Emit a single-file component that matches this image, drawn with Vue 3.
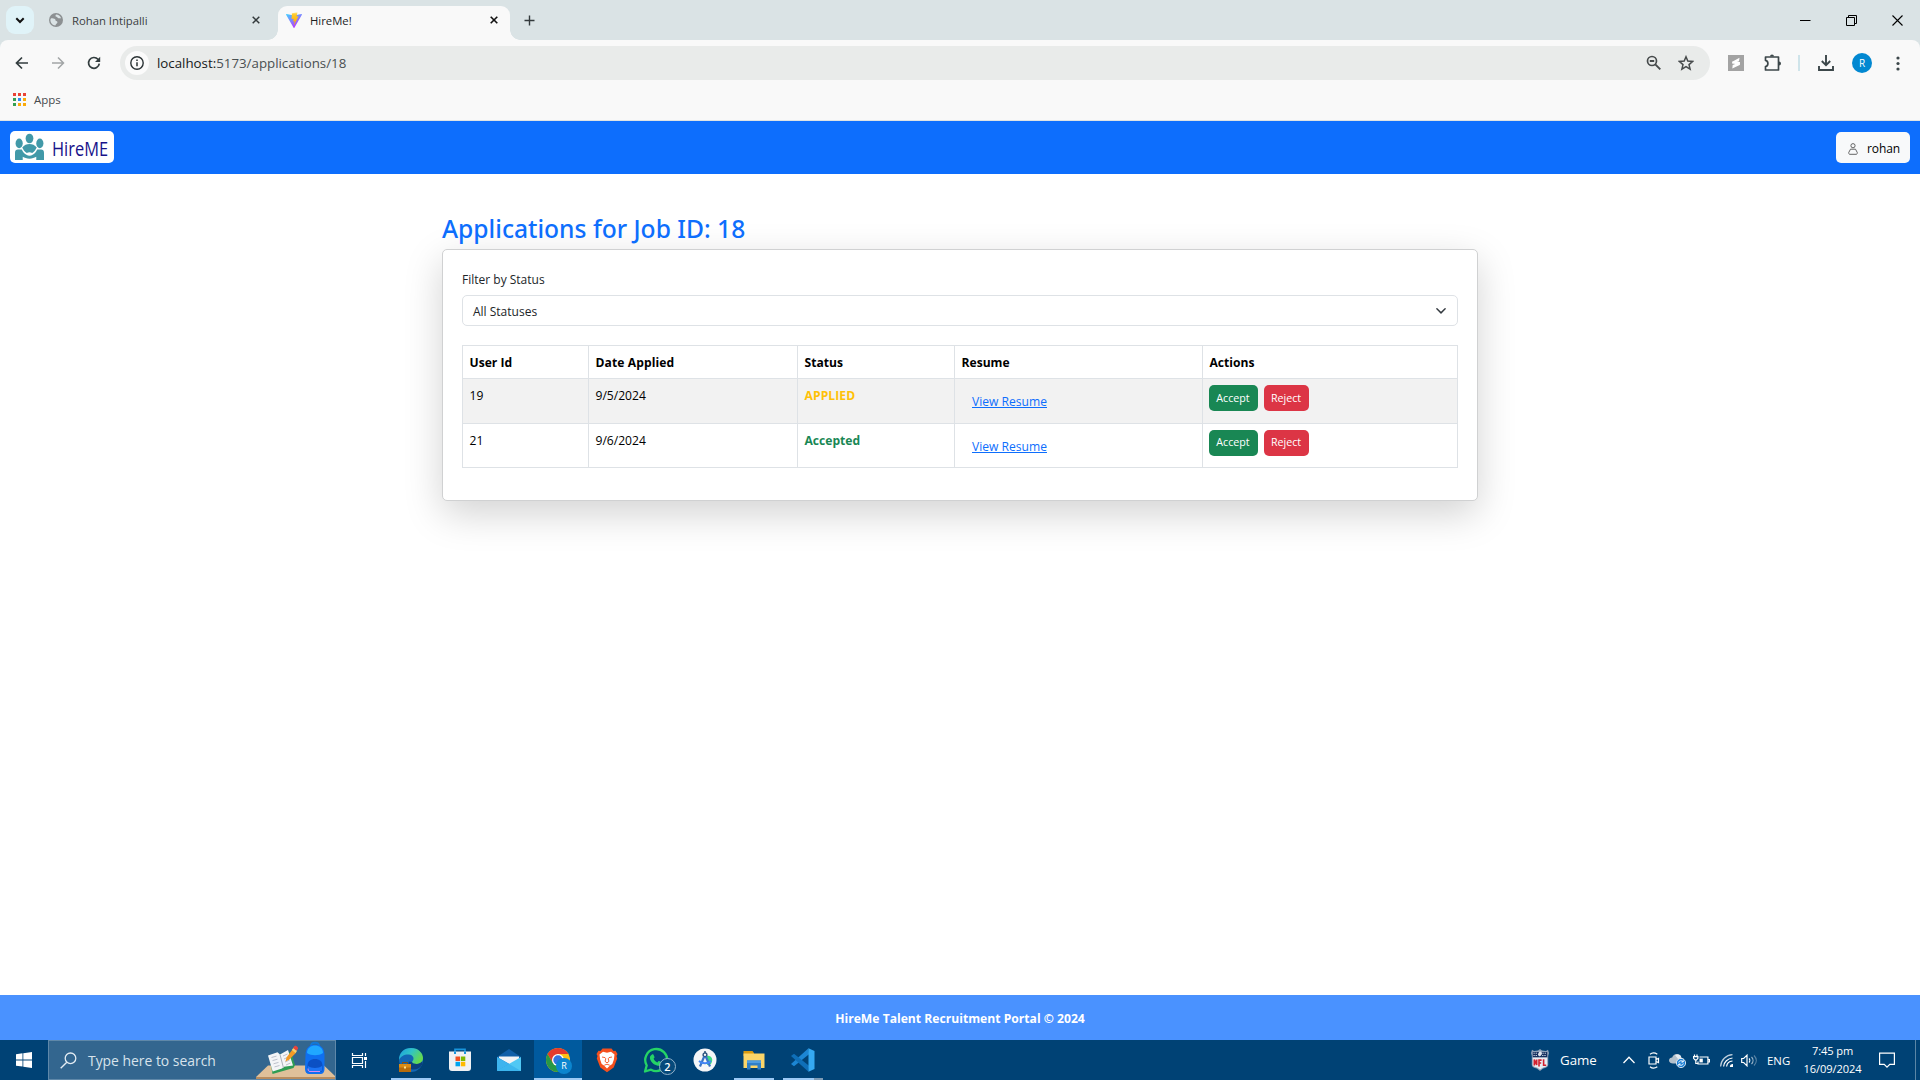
<script setup>
import { ref } from 'vue'

const status = ref('All Statuses')
const columns = ['User Id', 'Date Applied', 'Status', 'Resume', 'Actions']
const applications = [
  { id: 19, date: '9/5/2024', status: 'APPLIED', tone: 'applied' },
  { id: 21, date: '9/6/2024', status: 'Accepted', tone: 'accepted' },
]
</script>

<template>
  <div class="screen">
    <!-- Tab strip -->
    <div class="tabstrip">
      <div class="tab-menu">
        <svg width="10" height="7" viewBox="0 0 10 7"><path d="M1.3 1.3 5 5l3.700-3.700" fill="none" stroke="#111" stroke-width="2" /></svg>
      </div>
      <div class="tab idle">
        <svg class="favicon" width="14" height="14" viewBox="0 0 14 14">
          <circle cx="7" cy="7" r="7" fill="#8c9092" />
          <path d="M2.200 5.200c1.500.2 3 .1 3.800.9.9.9.1 1.600 1.200 2 1.100.4 1.600 1 1 2-.5.9-1.600 1.200-1.800 2.500C3.600 12.200 1.400 9.800 1.400 7c0-.7.3-1.300.8-1.800zM7 1.500c-.8 1.100-.7 2 .4 2.300 1.200.3.9 1.300 2.200 1.500 1 .2 1.600-.3 2.500 0C11.400 3 9.400 1.500 7 1.500z" fill="#dae3e5" />
        </svg>
        <span class="tab-title">Rohan Intipalli</span>
        <svg class="tab-x" width="8" height="8" viewBox="0 0 8 8"><path d="M.7.7l6.600 6.600M7.300.7.7 7.300" stroke="#333a3c" stroke-width="1.500" /></svg>
      </div>
      <div class="tab active">
        <svg class="favicon" width="16" height="16" viewBox="0 0 16 16">
          <defs>
            <linearGradient id="vt" x1="0" y1="0" x2=".6" y2="1"><stop offset="0" stop-color="#41d1ff" /><stop offset="1" stop-color="#bd34fe" /></linearGradient>
            <linearGradient id="vb" x1="0" y1="0" x2="0" y2="1"><stop offset="0" stop-color="#ffea83" /><stop offset=".2" stop-color="#ffc928" /><stop offset="1" stop-color="#ffa800" /></linearGradient>
          </defs>
          <path d="M15.900 2.700 8.400 15.800c-.2.300-.6.300-.8 0L.1 2.700c-.2-.3.100-.7.500-.6L8 3.400l7.400-1.300c.4-.1.700.3.500.6z" fill="url(#vt)" />
          <path d="m11.500.2-5.400 1c-.1 0-.2.100-.2.200l-.3 5.500c0 .1.100.3.300.2l1.500-.3c.1 0 .3.100.2.300l-.4 2.100c0 .1.100.3.300.2l.9-.3c.1 0 .3.100.2.300l-.7 3.300c0 .2.200.3.300.1l4.200-8.300c.1-.1 0-.3-.2-.3l-1.500.3c-.1 0-.3-.1-.2-.2l1-3.800c0-.1-.1-.3 0-.3z" fill="url(#vb)" />
        </svg>
        <span class="tab-title">HireMe!</span>
        <svg class="tab-x" width="8" height="8" viewBox="0 0 8 8"><path d="M.7.7l6.600 6.600M7.300.7.7 7.300" stroke="#111" stroke-width="1.600" /></svg>
      </div>
      <svg class="new-tab" width="11" height="11" viewBox="0 0 11 11"><path d="M5.500.5v10M.5 5.500h10" stroke="#333a3c" stroke-width="1.400" /></svg>
      <div class="window-buttons">
        <svg width="11" height="11" viewBox="0 0 11 11"><path d="M0 5.500h10.500" stroke="#000" /></svg>
        <svg width="11" height="11" viewBox="0 0 11 11"><path d="M.5 2.500h8v8h-8zM2.500 2.500v-2h8v8h-2" fill="none" stroke="#000" /></svg>
        <svg width="11" height="11" viewBox="0 0 11 11"><path d="M.5.5l10 10M10.500.5l-10 10" stroke="#000" stroke-width="1.100" /></svg>
      </div>
    </div>

    <!-- Address bar -->
    <div class="toolbar">
      <div class="nav">
        <svg width="14" height="14" viewBox="0 0 14 14"><path d="M13 7H2M7 1.500 1.500 7 7 12.500" fill="none" stroke="#333d3f" stroke-width="1.700" /></svg>
        <svg width="14" height="14" viewBox="0 0 14 14"><path d="M1 7h11M7 1.500 12.500 7 7 12.500" fill="none" stroke="#a2a5a6" stroke-width="1.500" /></svg>
        <svg width="14" height="14" viewBox="0 0 14 14"><path d="M12.300 7.700A5.400 5.400 0 1 1 11 3.300L12.500 5" fill="none" stroke="#333d3f" stroke-width="1.700" /><path d="M13.200.8v5.200H8z" fill="#333d3f" /></svg>
      </div>
      <div class="omnibox">
        <span class="site-info">
          <svg width="14" height="14" viewBox="0 0 14 14"><circle cx="7" cy="7" r="6.200" fill="none" stroke="#2b3335" stroke-width="1.400" /><path d="M7 6.200v4M7 3.600v1.500" stroke="#2b3335" stroke-width="1.500" /></svg>
        </span>
        <span class="url"><b>localhost:</b>5173/applications/18</span>
        <svg class="zoom" width="16" height="16" viewBox="0 0 16 16"><circle cx="6" cy="6" r="4.500" fill="none" stroke="#474b4c" stroke-width="1.700" /><path d="M3.800 6h4.400M9.300 9.300l5 5" stroke="#474b4c" stroke-width="1.900" /></svg>
        <svg class="star" width="16" height="16" viewBox="0 0 16 16"><path d="m8 1.800 1.800 4.300 4.700.4L11 9.600l1.100 4.600L8 11.700l-4.100 2.500L5 9.600 1.500 6.500l4.700-.4z" fill="none" stroke="#474b4c" stroke-width="1.500" /></svg>
      </div>
      <div class="extensions">
        <svg width="16" height="16" viewBox="0 0 16 16"><path d="M0 0h16v16H0z" fill="#a3a3a3" /><path d="m4.200 6.800 7.300-4-.5 3.400-6.800 2.500zM4.300 13.500l7.400-3.600.2-3-7.200 3z" fill="#fff" /><path d="m4.200 6.800 7.700.1-.2 3L5 8.500z" fill="#fff" /></svg>
        <svg width="18" height="18" viewBox="0 0 18 18"><path d="M1.500 3h13v13h-13v-3.400c1.700-.3 2.400-1.500 2.400-3.100S3.200 6.700 1.500 6.400z" fill="none" stroke="#3c474a" stroke-width="1.700" stroke-linejoin="round" /><path d="M6 2.500a2 2 0 0 1 4 0zM15 7.500a2 2 0 0 1 0 4z" fill="#3c474a" /></svg>
        <i class="divider"></i>
        <svg width="16" height="16" viewBox="0 0 16 16"><path d="M8 0v10M3.800 6 8 10.200 12.200 6M1 11v4h14v-4" fill="none" stroke="#3c474a" stroke-width="1.900" /></svg>
        <span class="profile">R</span>
        <svg width="4" height="15" viewBox="0 0 4 15"><circle cx="2" cy="2" r="1.600" fill="#3c474a" /><circle cx="2" cy="7.500" r="1.600" fill="#3c474a" /><circle cx="2" cy="13" r="1.600" fill="#3c474a" /></svg>
      </div>
    </div>
    <div class="bookmarks">
      <svg width="13" height="13" viewBox="0 0 13 13">
        <path d="M0 0h3v3H0zM5 0h3v3H5zM10 0h3v3h-3z" fill="#ea4335" />
        <path d="M0 5h3v3H0zM0 10h3v3H0z" fill="#34a053" /><path d="M5 5h3v3H5z" fill="#2d8cf0" />
        <path d="M10 5h3v3h-3zM5 10h3v3H5zM10 10h3v3h-3z" fill="#fbab0a" />
      </svg>
      <span>Apps</span>
    </div>

    <!-- Application page -->
    <header class="navbar">
      <div class="brand">
        <svg width="29" height="28" viewBox="0 0 30 28" fill="#4199a8">
          <ellipse cx="15" cy="5.200" rx="4" ry="5" /><ellipse cx="4.300" cy="10.300" rx="3.700" ry="5" /><ellipse cx="25.700" cy="10.300" rx="3.700" ry="5" />
          <path d="M7.500 14.500c2-2.600 4.600-3.700 7.500-3.700s5.500 1.100 7.500 3.700c-1 2.200-2.800 4.600-4.700 5.800-1.700-1.300-4-1.300-5.600 0-2-1.200-3.800-3.600-4.700-5.800z" />
          <path d="M0 27.500V20c0-2 1.200-3.300 3-3.300h4c1.500 3 3 4.600 4.800 5.300 2 1.300 4.400 1.300 6.400 0 1.800-.7 3.300-2.300 4.800-5.300h4c1.800 0 3 1.300 3 3.300v7.500h-8v-3.300c-2.200 1-4 2-7 2s-5-1-7-2v3.300z" />
        </svg>
        <span>HireME</span>
      </div>
      <button class="user">
        <svg width="10" height="12" viewBox="0 0 10 12" fill="none" stroke="#555" stroke-width=".9"><circle cx="5" cy="2.700" r="2.100" /><path d="M2.500 6.200h5l1.800 3.400c.1.900-.3 1.700-1.200 1.700H1.900c-.9 0-1.300-.8-1.200-1.700z" stroke-linejoin="round" /></svg>
        <span>rohan</span>
      </button>
    </header>

    <main class="page">
      <h2>Applications for Job ID: 18</h2>
      <section class="card">
        <label>Filter by Status</label>
        <div class="select">
          <span>{{ status }}</span>
          <svg width="12" height="12" viewBox="0 0 16 16"><path d="m2.500 5 5.500 5.500L13.500 5" fill="none" stroke="#343a40" stroke-width="1.900" stroke-linecap="round" stroke-linejoin="round" /></svg>
        </div>
        <table>
          <colgroup><col class="c1" /><col class="c2" /><col class="c3" /><col class="c4" /><col /></colgroup>
          <thead><tr><th v-for="c in columns" :key="c">{{ c }}</th></tr></thead>
          <tbody>
            <tr v-for="a in applications" :key="a.id">
              <td>{{ a.id }}</td>
              <td>{{ a.date }}</td>
              <td class="status" :class="a.tone">{{ a.status }}</td>
              <td><a class="link">View Resume</a></td>
              <td class="action-cell"><div class="actions"><button class="accept">Accept</button><button class="reject">Reject</button></div></td>
            </tr>
          </tbody>
        </table>
      </section>
    </main>
    <footer class="footer">HireMe Talent Recruitment Portal © 2024</footer>

    <!-- Windows taskbar -->
    <div class="taskbar">
      <div class="start">
        <svg width="16" height="16" viewBox="0 0 16 16" fill="#fff"><path d="M0 2.200 6.500 1.300v6.200H0zM7.300 1.200 16 0v7.500H7.300zM0 8.400h6.500v6.200L0 13.700zM7.300 8.400H16V16l-8.700-1.200z" /></svg>
      </div>
      <div class="search">
        <svg class="lens" width="17" height="17" viewBox="0 0 17 17"><circle cx="10.500" cy="6.300" r="5.300" fill="none" stroke="#e3ecf3" stroke-width="1.300" /><path d="M6.800 10.200.7 16.200" stroke="#e3ecf3" stroke-width="1.400" /></svg>
        <span>Type here to search</span>
        <svg class="school" width="79" height="38" viewBox="0 0 79 38">
          <path d="M0 36 12 24.500h56L79 35v3H0z" fill="#dfc09a" /><path d="M0 36h79v2H0z" fill="#b98d5f" />
          <path d="m16.500 33 21-6 1.500-3L35 11l-21.500 4z" fill="#2e9d53" /><path d="m12 14.500 9.500-3.200L24 13.500l8-4.500 5 15.500-9 1.200-2 1.800-9.300 3z" fill="#f4f5f7" /><path d="m24 13.500 3.500 13.500" stroke="#aab0bb" /><path d="m15.500 16.500 5-1.400m-4 4.500 5-1.400m-4 4.600 5-1.400m-4 4.500 5-1.400M27 15l4.500-2m-3.500 5 4.500-2M29 21l4.500-2m-3.500 5 4.500-2" stroke="#b5bac5" stroke-width=".9" />
          <path d="m29.500 20.500 1-4 6-8 3.800 3-7 7z" fill="#f49a25" /><path d="m35.800 9 1.700-2.300 3.700 3L39.500 12z" fill="#f4d06a" /><path d="m37 7 1.600-2c1-1 4 .8 3.400 2.700l-1.500 2z" fill="#e8443c" />
          <path d="M55 5c0-4.500 8-4.500 8 0" fill="none" stroke="#1278d8" stroke-width="2" />
          <path d="M49.500 14c0-7 4-10.500 9.500-10.500S68.500 7 68.500 14v14c0 3-1.500 5-4 5h-11c-3 0-4.500-2-4.500-5z" fill="#0f6ff0" /><path d="M51 12c0-5 4-7.500 8-7.500s8 2.500 8 7.500c-4 3-12 3-16 0z" fill="#20a7ff" /><path d="M51.500 25c0-5 3.300-7 7.500-7s7.500 2 7.500 7v4c0 1.500-1 2-2 2h-11c-1.200 0-2-.5-2-2z" fill="#0b50c4" /><path d="M52 25c3 2.500 11 2.500 14 0v3.600c0 1.400-.5 1.900-1.500 1.900h-11c-1 0-1.500-.5-1.500-1.900z" fill="#1c74f5" /><path d="M52 27.500c0 2.500.5 3 2 3h10" fill="none" stroke="#d58cf2" />
        </svg>
      </div>
      <div class="task-view">
        <svg width="17" height="17" viewBox="0 0 17 17" fill="none" stroke="#fff" stroke-width="1.200"><path d="M1.500 1v2.500h10V1M1.500 16v-2.500h10V16M1.500 5.500h10v6h-10zM14.500 1v3M14.500 9v7" /><path d="M13 5h3v3h-3z" fill="#fff" stroke="none" /></svg>
      </div>

      <div class="app running">
        <svg width="26" height="26" viewBox="0 0 26 26">
          <defs><linearGradient id="e1" x1="0" y1="0" x2="1" y2=".5"><stop offset="0" stop-color="#1b9de0" /><stop offset=".5" stop-color="#30c3c7" /><stop offset="1" stop-color="#65d94e" /></linearGradient></defs>
          <circle cx="13" cy="13" r="12" fill="#1266b4" />
          <path d="M1 13C1 5.500 6 1 13 1c7.500 0 12 5 12 10 0 4-3 6-6.500 6-2.500 0-4.500-.7-4.500-2 0-1 1.500-1 1.500-3.500C15.500 9 13 7.500 10 7.500 6 7.500 2.500 9.500 1 13z" fill="url(#e1)" />
          <path d="M14 15c0 1.300 2 2 4.500 2 2.300 0 4.300-.9 5.500-2.500l.5 2.500c-2 4-6 6-10 5.500-3.500-.5-5-4.500-3.500-8z" fill="#0c3f7d" />
          <path d="M1 17h12v8H1z" fill="#b66c0c" /><path d="M1 17h12v3.500H1z" fill="#d98c18" /><path d="M4.500 17v-1.500h5V17" fill="none" stroke="#8a5207" /><path d="M6 19.500h2v2H6z" fill="#ffe08a" />
        </svg>
      </div>
      <div class="app">
        <svg width="24" height="26" viewBox="0 0 24 26"><path d="M7 6V2.300h10V6" fill="none" stroke="#1995dc" stroke-width="1.700" /><path d="M1 4.500h22V21c0 2-1 3-3 3H4c-2 0-3-1-3-3z" fill="#f0f1f3" /><path d="M6 4.500h2V7H6zm10 0h2V7h-2z" fill="#1995dc" /><path d="M7.500 9.500H12V14H7.500z" fill="#f25022" /><path d="M12.800 9.500h4.500V14h-4.500z" fill="#7fba00" /><path d="M7.500 14.800H12v4.500H7.500z" fill="#00a4ef" /><path d="M12.800 14.800h4.500v4.500h-4.500z" fill="#ffb900" /></svg>
      </div>
      <div class="app">
        <svg width="24" height="24" viewBox="0 0 24 24"><path d="M0 9 12 1l12 8v5H0z" fill="#0f5fa8" /><path d="M2 8.500h20V18H2z" fill="#f2f4f6" /><path d="M0 9l12.500 7L24 23H0z" fill="#1a86d8" /><path d="M24 9 0 23h24z" fill="#50c8f4" /><path d="M12.200 16 24 23H0z" fill="#3cb6ee" /><path d="m0 9 12.200 7L0 23z" fill="#3db4ee" /></svg>
      </div>
      <div class="app running current">
        <svg width="26" height="26" viewBox="0 0 26 26">
          <circle cx="13" cy="13" r="12" fill="#fbc116" /><path d="M2.600 7A12 12 0 0 1 23.400 7H13l-5.200 9z" fill="#e33b2e" /><path d="M2.600 7 7.800 16 13 19l-2.600 5.700A12 12 0 0 1 2.600 7z" fill="#279847" /><path d="M7.800 16 13 19h5l-4.500 6a12 12 0 0 1-3.500-.4z" fill="#279847" /><circle cx="13" cy="13" r="6" fill="#fff" /><circle cx="13" cy="13" r="4.700" fill="#3275e0" />
        </svg>
        <span class="badge profile-badge">R</span>
      </div>
      <div class="app">
        <svg width="22" height="26" viewBox="0 0 22 26"><path d="M6.500 1.500h9L17.500 4l2-.3L21.500 7l-1 2 .7 2.500-3.500 9L11 25.300l-6.700-4.800-3.500-9L1.500 9l-1-2 2-3.300 2 .3z" fill="#f4501e" /><path d="m3.500 7.500 3.500-2.700 4 .9 4-.9 3.500 2.700-.6 5-1.600 4.500-2.300 1.500L11 21.500l-3-3L5.700 17l-1.600-4.500z" fill="#fff" /><path d="m6 10 3 .6.800 1.200-.8 2.500 2 1.600 2-1.600-.8-2.500.8-1.200 3-.6M8.300 18.200l2.700-1 2.700 1" fill="none" stroke="#f4501e" stroke-width=".9" /></svg>
      </div>
      <div class="app">
        <svg width="26" height="26" viewBox="0 0 26 26"><path d="M2 24.500 3.700 18.500A11 11 0 1 1 8 22.700z" fill="none" stroke="#25d366" stroke-width="2.300" stroke-linejoin="round" /><path d="M9 7.500c.5-.3 1.200-.2 1.500.3l1 2.200c.1.400 0 .7-.9 1.800.8 1.700 2 2.900 3.800 3.600 1-1.200 1.300-1.500 1.800-1.300l2.200 1.100c.6.400.3 1.500-.1 2.200-.8 1.200-2.400 1.600-4.200 1.100-3.700-1-6.700-4.100-7.200-7.300-.1-1.500.8-3 2.100-3.700z" fill="#25d366" /></svg>
        <span class="badge count">2</span>
      </div>
      <div class="app">
        <svg width="24" height="24" viewBox="0 0 24 24"><circle cx="12" cy="12" r="11.500" fill="#f5f6f8" /><path d="M14 8c4-1 7 3 4 8l-4 1z" fill="#3ddc84" /><circle cx="12" cy="6.800" r="1.900" fill="none" stroke="#27507c" stroke-width="1.400" /><path d="M12 3v2.500" stroke="#27507c" stroke-width="1.500" /><path d="M11.200 8.500 7 18.500M12.800 8.500l4.200 10" stroke="#3a74c4" stroke-width="2.200" /><path d="M6 13c3 3 9 3 12 0" fill="none" stroke="#4285f4" stroke-width="1.800" /></svg>
      </div>
      <div class="app running">
        <svg width="24" height="24" viewBox="0 0 24 24"><path d="M1.500 3h9l1.500 2v3H1.500z" fill="#d99a10" /><path d="M1.500 5.500H22.500V20h-21z" fill="#fbd569" /><path d="M5 21.500V12.500h14v9h-3.500v-4h-7v4z" fill="#2f7fc8" /><path d="M5 12.500h14V15H5z" fill="#4f9de0" /></svg>
      </div>
      <div class="app running stacked">
        <svg width="24" height="24" viewBox="0 0 24 24"><path d="M17.500.3 18 6.200 3 18.200 0 16z" fill="#1c86d4" /><path d="M17.500 23.700 18 17.800 3 5.800 0 8z" fill="#0f6fb8" /><path d="M17.500.3 23.500 3v18l-6 2.700z" fill="#35a9f2" /></svg>
      </div>

      <div class="tray">
        <svg class="nfl" width="18" height="22" viewBox="0 0 18 22"><path d="M9 0l2 1.500L15 2l2-1.200L18 4l-.8 3v9c0 2-2.500 3-5 3.500L9 22l-3.200-2.500C3 19 .8 18 .8 16V7L0 4 1 .8 3 2l4-.5z" fill="#8ea0b8" /><path d="M1.800 3h14.400v5.500H1.800z" fill="#16305f" /><path d="M2.500 4.200h4M11.500 4.200h4M2.500 6.500h4.300M11.200 6.500h4.300" stroke="#dfe5ee" stroke-dasharray="1.200 1" /><ellipse cx="9" cy="4.800" rx="1.800" ry="2.400" transform="rotate(30 9 4.800)" fill="#dfe5ee" /><path d="M1.800 8.500h14.400V16c0 1.500-3 2.300-4.500 2.700L9 20.500l-2.500-1.800C5 18.300 1.800 17.500 1.800 16z" fill="#e9edf3" /><path d="M3.300 16.500v-6l2.400 5.500v-5.500M8 17.500v-6.400h2.600M8 14h2.200M12.600 10.300v5.900h2.600" fill="none" stroke="#d3202f" stroke-width="1.600" /></svg>
        <span class="news">Game</span>
        <svg class="caret" width="12" height="8" viewBox="0 0 12 8"><path d="m.5 7 5.500-5.700L11.500 7" fill="none" stroke="#fff" stroke-width="1.300" /></svg>
        <svg class="meet" width="12" height="17" viewBox="0 0 12 17" fill="none" stroke="#fff" stroke-width="1.200"><path d="M1 5h7v7H1zM8 7.500l2.500-1v4L8 9.500M2 2.200C4 .6 7 .6 9.300 2.200M2 14.800c2 1.600 5 1.600 7.300 0" /></svg>
        <svg class="cloud" width="17" height="15" viewBox="0 0 17 15"><path d="M4 10.500c-2 0-4-1-4-3s1.500-3 3.200-3C4 2 6 .8 8 1c2.500 0 4 1.500 4.300 3.500L15 6v4.500z" fill="#b4c0cb" /><path d="M6 2c3-1.500 6 0 6.300 2.500L9 6z" fill="#e6ebf0" /><circle cx="12" cy="10" r="4.600" fill="#1b7fd6" stroke="#fff" stroke-width=".8" /><path d="M9.700 9.500c.4-2 3.500-2.500 4.500-.5m0-1.800V9h-1.800M14.300 10.500c-.4 2-3.500 2.500-4.500.5m0 1.800V11h1.800" fill="none" stroke="#fff" /></svg>
        <svg class="battery" width="17" height="13" viewBox="0 0 17 13" fill="none" stroke="#fff" stroke-width="1.200"><path d="M6.500 3h8.400v7H5V7.500M15 5.500h1.400v2.500H15M1.500.5v2M4 .5v2M.6 2.600h4.300v1.700L3.600 5.800H2L.6 4.300zM2.800 6v3.500H5" /><path d="M6.500 4.600h3.300v3.800H6.500z" fill="#fff" stroke="none" /></svg>
        <svg class="wifi" width="13" height="13" viewBox="0 0 13 13" fill="none" stroke="#fff" stroke-width="1.200"><path d="M.6 12.500C1 6 6 1 12.500.6" opacity=".75" /><path d="M3.600 12.500c.4-4.500 4-8 8.900-8.500M6.600 12.500c.3-3 2.600-5.200 5.900-5.500" /><path d="M10.500 12.500c0-1.200.8-1.800 2-1.900v1.900z" fill="#fff" /></svg>
        <svg class="volume" width="17" height="13" viewBox="0 0 17 13" fill="none" stroke="#fff" stroke-width="1.200"><path d="M.7 4.500h2L6 1.200v10.600L2.700 8.500h-2zM8 4.500c1 1 1 3 0 4" /><path d="M10.500 3c2 2 2 5 0 7" opacity=".6" /><path d="M13 1.500c3 3 3 7 0 10" opacity=".35" /></svg>
        <span class="lang">ENG</span>
        <div class="clock"><span>7:45 pm</span><span>16/09/2024</span></div>
        <svg class="notice" width="16" height="17" viewBox="0 0 16 17"><path d="M.6 1.100h14.800v11.300h-4.600L8 15.200l-2.800-2.800H.6z" fill="none" stroke="#fff" stroke-width="1.200" /></svg>
        <i class="peek"></i>
      </div>
    </div>
  </div>
</template>

<style>
body { margin: 0; overflow: hidden; }
</style>

<style scoped>
* { box-sizing: border-box; }
svg { display: block; flex: none; }
.screen {
  width: 1920px; height: 1080px; display: flex; flex-direction: column; overflow: hidden;
  background: #fff; color: #212529; font-family: "Open Sans", "Noto Sans", sans-serif; font-size: 12px; white-space: nowrap;
}
button { font-family: inherit; border: 0; margin: 0; }

.tabstrip { height: 40px; flex: none; display: flex; background: #dae3e5; position: relative; }
.tab-menu { width: 28px; height: 28px; margin: 6px 0 0 6px; border-radius: 9px; background: #e0f3f8; display: flex; align-items: center; justify-content: center; }
.tab { display: flex; align-items: center; font-size: 11.300px; color: #3b4042; }
.tab.idle { width: 244px; padding: 0 18px 0 15px; }
.tab.active { width: 232px; margin-top: 6px; padding: 0 12px 6px 8px; background: #f9f9f9; border-radius: 9px 9px 0 0; position: relative; color: #1c1e1f; }
.tab.active::before, .tab.active::after { content: ""; position: absolute; bottom: 0; width: 10px; height: 10px; }
.tab.active::before { left: -10px; background: radial-gradient(circle at 0 0, transparent 9.500px, #f9f9f9 10px); }
.tab.active::after { right: -10px; background: radial-gradient(circle at 100% 0, transparent 9.500px, #f9f9f9 10px); }
.tab-title { margin-left: 9px; flex: 1; }
.active .tab-title { margin-left: 8px; }
.new-tab { margin: 15px 0 0 14px; }
.window-buttons { margin: 15px 17px 0 auto; display: flex; gap: 35px; }

.toolbar { height: 46px; flex: none; display: flex; align-items: center; background: #f9f9f9; border-radius: 8px 8px 0 0; box-shadow: 0 -8px 0 #dae3e5; }
.nav { width: 120px; display: flex; gap: 22px; padding-left: 15px; }
.omnibox { width: 1590px; height: 34px; border-radius: 17px; background: #e9ebea; display: flex; align-items: center; padding: 0 16px 0 5px; }
.site-info { width: 24px; height: 24px; border-radius: 50%; background: #fbfbfb; display: flex; align-items: center; justify-content: center; }
.url { margin-left: 8px; font-size: 13.300px; color: #4a4f51; flex: 1; }
.url b { font-weight: 400; color: #16191a; }
.zoom { margin-right: 16px; }
.extensions { display: flex; align-items: center; margin-left: 18px; }
.extensions > :nth-child(2) { margin-left: 20px; }
.divider { width: 2px; height: 16px; background: #cfe4ea; margin: 0 18px 0 16px; }
.profile { width: 20px; height: 20px; border-radius: 50%; background: #0288d1; color: #fff; font-size: 10px; line-height: 20px; text-align: center; margin: 0 24px 0 18px; }
.bookmarks { height: 35px; flex: none; background: #f9f9f9; border-bottom: 1px solid #dfe3e4; display: flex; align-items: center; gap: 8px; padding: 0 0 7px 13px; font-size: 11.500px; color: #474b4d; }

.navbar { height: 53px; flex: none; background: #0d6efd; display: flex; justify-content: space-between; align-items: flex-start; padding: 10px 10px 0; }
.brand { width: 104px; height: 32px; border-radius: 5px; background: #fff; display: flex; padding: 2px 0 0 5px; }
.brand span { margin-left: 7.500px; width: 58px; font-size: 20px; line-height: 31px; color: #17128a; transform: scaleX(.82); transform-origin: 0 0; }
.user { width: 74px; height: 31px; margin-top: 1px; border-radius: 5px; background: #f8f9fa; display: flex; align-items: center; padding: 1px 0 0 12px; gap: 9px; font-size: 12px; letter-spacing: -.1px; color: #000; }
.user svg { margin-top: 2px; }

.page { flex: 1; min-height: 0; width: 1036px; margin: 0 auto; padding-top: 38px; }
h2 { margin: 0; height: 37px; font: 500 24.600px/34px "Noto Sans", sans-serif; color: #0d6efd; }
.card { height: 252px; padding: 19px; border: 1px solid #d0d1d2; border-radius: 5px; background: #fff; box-shadow: 0 12.800px 38.400px rgba(0, 0, 0, .175); }
label { display: block; height: 26px; line-height: 21px; }
.select { height: 31px; border: 1px solid #dee2e6; border-radius: 5px; display: flex; align-items: center; justify-content: space-between; padding: 1px 10px 0 10px; margin-bottom: 19px; }
.select svg { margin-bottom: 1px; }
table { width: 996px; table-layout: fixed; border-collapse: collapse; color: #000; }
.c1 { width: 126px; } .c2 { width: 209px; } .c3 { width: 157px; } .c4 { width: 248px; }
th, td { border: 1px solid #dee2e6; padding: 7px 6.500px 5px; text-align: left; vertical-align: top; line-height: 20px; font-size: 12.100px; }
th { font-weight: 700; }
th:nth-child(2) { letter-spacing: .1px; }
tbody tr { height: 44.500px; }
tbody td { padding-bottom: 0; }
tbody tr:first-child td { background: #f2f2f2; }
td.action-cell { padding: 6px 0 0 5.500px; }
.status { font-weight: 700; }
.applied { color: #ffc107; letter-spacing: .1px; }
.accepted { color: #198754; }
.link { display: block; padding: 6px 10.500px; color: #0d6efd; text-decoration: underline; }
.actions { display: flex; gap: 6px; }
.actions button { height: 26px; border-radius: 5px; color: #fff; font-size: 10.700px; line-height: 24px; padding: 0 0 1px; }
.actions .accept { width: 49px; background: #198754; }
.actions .reject { width: 45px; background: #dc3545; }
.footer { height: 45px; flex: none; background: #4a92ff; color: #fff; font-weight: 700; font-size: 12.150px; line-height: 47px; text-align: center; }

.taskbar { height: 40px; flex: none; display: flex; background: #004275; color: #fff; }
.start { width: 48px; display: flex; align-items: center; justify-content: center; }
.search { width: 288px; border: 1px solid #5f88a9; background: #33668f; display: flex; align-items: center; padding-left: 11px; font-size: 13.900px; color: #d8e3ec; }
.search span { margin-left: 11px; flex: 1; }
.school { align-self: flex-end; }
.task-view { width: 48px; display: flex; align-items: center; padding-left: 15px; margin-right: 3px; }
.app { width: 48px; margin-right: 1px; display: flex; align-items: center; justify-content: center; position: relative; }
.app.running::after { content: ""; position: absolute; left: 4px; right: 4px; bottom: 0; height: 2px; background: #9cc9f5; }
.app.current { background: #005a9e; }
.app.current::after { left: 0; right: 0; }
.app.stacked::after { right: 4px; background: linear-gradient(90deg, #9cc9f5 31px, #7e9bb5 31px); }
.badge { position: absolute; border-radius: 50%; width: 16px; height: 16px; text-align: center; line-height: 15px; font-size: 9px; background: #0b85cf; }
.profile-badge { left: 22px; top: 18px; }
.badge.count { left: 27px; top: 18px; width: 17px; height: 17px; background: #064a7b; border: 1px solid #93b3cb; font-size: 11px; font-weight: 600; line-height: 15px; }
.tray { margin-left: auto; display: flex; align-items: center; }
.news { font-size: 13.300px; margin: 0 26px 0 11px; width: 36px; }
.nfl { margin-left: 0; }
.caret { margin-left: 1px; }
.meet { margin-left: 13px; }
.cloud { margin-left: 9px; }
.battery { margin-left: 7px; }
.wifi { margin-left: 10px; }
.volume { margin-left: 8px; }
.lang { font-size: 11.400px; margin-left: 9px; width: 23px; }
.clock { width: 85px; display: flex; flex-direction: column; align-items: center; font-size: 11.100px; line-height: 18px; letter-spacing: -.1px; }
.notice { margin-left: 4px; }
.peek { width: 1px; height: 40px; margin: 0 4px 0 20px; background: #5b86a6; }
</style>
